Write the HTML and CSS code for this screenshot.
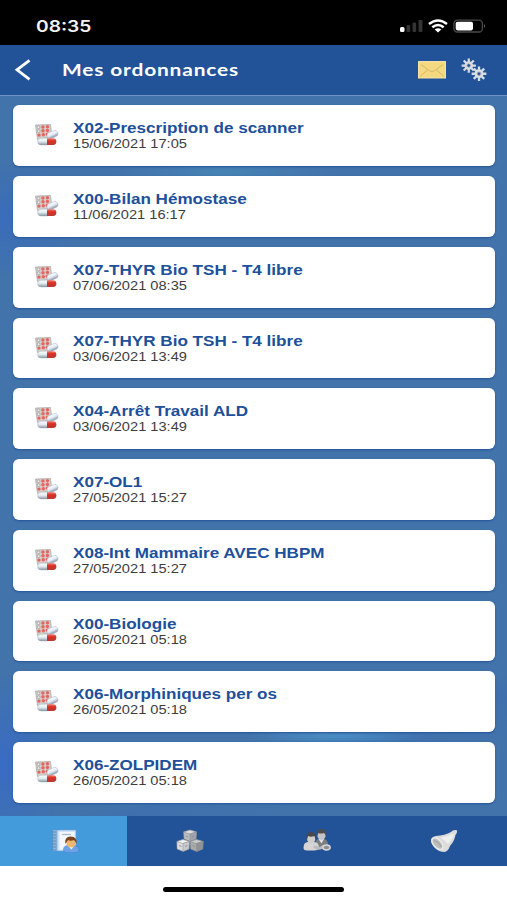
FILE: index.html
```html
<!DOCTYPE html>
<html lang="fr">
<head>
  <meta charset="UTF-8" />
  <meta name="viewport" content="width=device-width, initial-scale=1.0"/>
  <title>Mes ordonnances</title>
  <link rel="stylesheet" href="styles.css">
</head>
<body>
  <svg class="defs" width="0" height="0">
    <defs>
      <linearGradient id="redCap" x1="0" y1="0" x2="0" y2="1">
        <stop offset="0" stop-color="#f08074"/>
        <stop offset=".4" stop-color="#d92f24"/>
        <stop offset="1" stop-color="#b83a34"/>
      </linearGradient>
      <linearGradient id="whiteCap" x1="0" y1="0" x2="0" y2="1">
        <stop offset="0" stop-color="#fff"/>
        <stop offset=".5" stop-color="#e0e8f0"/>
        <stop offset="1" stop-color="#8794a2"/>
      </linearGradient>
      <symbol id="pills" viewBox="0 0 24 24">
        <path d="M1 2 16 1.500 17.500 14 3 16.500z" fill="#d5cdcb" stroke="#aaa5a5" stroke-width=".7"/>
        <g fill="#e4675c">
          <circle cx="8.400" cy="4" r="1.700"/><circle cx="13" cy="3.800" r="1.700"/>
          <circle cx="8.500" cy="7.700" r="1.700"/><circle cx="12.900" cy="7.400" r="1.700"/>
          <circle cx="4.500" cy="12.100" r="1.700"/><circle cx="8.800" cy="11.700" r="1.700"/><circle cx="12.900" cy="11.200" r="1.700"/>
        </g>
        <g fill="#eee" stroke="#9b9898" stroke-width=".7"><circle cx="4" cy="4.300" r="1.400"/><circle cx="4.200" cy="8.200" r="1.400"/></g>
        <rect x="12.200" y="8.500" width="11.500" height="6.200" rx="3.100" fill="url(#whiteCap)" stroke="#98a6c4" stroke-width=".4" transform="rotate(-24 18 11.500)"/>
        <path d="M6.500 15.200H13V22H6.500A3.400 3.400 0 0 1 6.500 15.200z" fill="url(#whiteCap)" stroke="#9aa7b3" stroke-width=".4"/>
        <path d="M12.500 15.200H18.500A3.400 3.400 0 0 1 18.500 22H12.500z" fill="url(#redCap)"/>
      </symbol>
      <symbol id="gear" viewBox="-10 -10 20 20">
        <g stroke="#d5dbe2" stroke-width="3">
          <path d="M0-9.500V9.500M-9.500 0H9.500M-6.700-6.700 6.700 6.700M6.700-6.700-6.700 6.700"/>
        </g>
        <circle r="5.700" fill="#d9dde2"/>
        <circle r="2.300" fill="#235398" stroke="#a5a9ad" stroke-width="1"/>
      </symbol>
    </defs>
  </svg>

  <div class="statusbar">
    <span class="clock">08:35</span>
    <div class="status-icons">
      <svg width="24" height="14" viewBox="0 0 24 14">
        <rect x="1" y="8" width="4.500" height="5" rx="1.500" fill="#fff"/>
        <rect x="7.500" y="6" width="3.700" height="7" rx="1" fill="#333"/>
        <rect x="13.500" y="3.500" width="3.700" height="9.500" rx="1" fill="#333"/>
        <rect x="19.500" y="1" width="4" height="12" rx="1" fill="#333"/>
      </svg>
      <svg class="wifi" width="20" height="14" viewBox="0 0 20 14">
        <g fill="none" stroke="#fff" stroke-width="2.400">
          <path d="M1 5Q10-2.200 19 5"/>
          <path d="M4.300 8.300Q10 3.600 15.700 8.300"/>
        </g>
        <path d="M6.700 10.400Q10 8 13.300 10.400L10 13.500z" fill="#fff"/>
      </svg>
      <svg class="battery" width="33" height="14" viewBox="0 0 33 14">
        <rect x=".9" y="1.200" width="28.500" height="11.800" rx="3.500" fill="none" stroke="#4a4a4a" stroke-width="1.300"/>
        <rect x="2.700" y="2.800" width="17.300" height="8.600" rx="1.800" fill="#fff"/>
        <path d="M31 5Q33 7 31 9z" fill="#666"/>
      </svg>
    </div>
  </div>

  <header class="topbar">
    <svg class="back" width="18" height="22" viewBox="0 0 18 22">
      <path d="M15.500 1.300 3 10.800 15.500 20.300" fill="none" stroke="#fff" stroke-width="2.800"/>
    </svg>
    <h1>Mes ordonnances</h1>
    <div class="actions">
      <svg width="28" height="18" viewBox="0 0 28 18">
        <rect x=".5" y=".5" width="27" height="16.500" fill="#f5d981" stroke="#f2e2a9"/>
        <path d="M2 15.500 10 8.500M26 15.500 18 8.500M3 3.500 11 9.500Q14 12 17 9.500L25 3.500" fill="none" stroke="#cfb468" stroke-width=".9"/>
      </svg>
      <svg class="gears" width="28" height="24" viewBox="0 0 28 24">
        <use href="#gear" x="0" y="0" width="17.500" height="15"/>
        <use href="#gear" x="10" y="8" width="18" height="15.500"/>
      </svg>
    </div>
  </header>

  <main class="list">
    <div class="card">
      <svg class="pills"><use href="#pills"/></svg>
      <div class="info"><h2>X02-Prescription de scanner</h2><p>15/06/2021 17:05</p></div>
    </div>
    <div class="card">
      <svg class="pills"><use href="#pills"/></svg>
      <div class="info"><h2>X00-Bilan Hémostase</h2><p>11/06/2021 16:17</p></div>
    </div>
    <div class="card">
      <svg class="pills"><use href="#pills"/></svg>
      <div class="info"><h2>X07-THYR Bio TSH - T4 libre</h2><p>07/06/2021 08:35</p></div>
    </div>
    <div class="card">
      <svg class="pills"><use href="#pills"/></svg>
      <div class="info"><h2>X07-THYR Bio TSH - T4 libre</h2><p>03/06/2021 13:49</p></div>
    </div>
    <div class="card">
      <svg class="pills"><use href="#pills"/></svg>
      <div class="info"><h2>X04-Arrêt Travail ALD</h2><p>03/06/2021 13:49</p></div>
    </div>
    <div class="card">
      <svg class="pills"><use href="#pills"/></svg>
      <div class="info"><h2>X07-OL1</h2><p>27/05/2021 15:27</p></div>
    </div>
    <div class="card">
      <svg class="pills"><use href="#pills"/></svg>
      <div class="info"><h2>X08-Int Mammaire AVEC HBPM</h2><p>27/05/2021 15:27</p></div>
    </div>
    <div class="card">
      <svg class="pills"><use href="#pills"/></svg>
      <div class="info"><h2>X00-Biologie</h2><p>26/05/2021 05:18</p></div>
    </div>
    <div class="card">
      <svg class="pills"><use href="#pills"/></svg>
      <div class="info"><h2>X06-Morphiniques per os</h2><p>26/05/2021 05:18</p></div>
    </div>
    <div class="card">
      <svg class="pills"><use href="#pills"/></svg>
      <div class="info"><h2>X06-ZOLPIDEM</h2><p>26/05/2021 05:18</p></div>
    </div>
  </main>

  <nav class="tabs">
    <div class="tab active">
      <!-- carnet -->
      <svg class="book" width="30" height="24" viewBox="0 0 30 24">
        <rect x="3" y="1" width="5" height="21" fill="#88b4dc"/>
        <path d="M7 1H26V22H7z" fill="#cfe4f7" stroke="#6d9fd0" stroke-width=".7"/>
        <rect x="9.500" y="3" width="15" height="17.500" fill="#f3f7fb"/>
        <path d="M1.500 3H6M1.500 6H6M1.500 9H6M1.500 12H6M1.500 15H6M1.500 18H6M1.500 21H6" stroke="#6689ab" stroke-width="1.200"/>
        <path d="M12 5.500H21" stroke="#a6bbcc" stroke-width="1.300"/>
        <path d="M13.500 21Q13.500 16.500 18 16.500H25Q29 17 29 21 29 23.700 25 23.700H17Q13.500 23.700 13.500 21z" fill="#6ba3e6" stroke="#3f7cc6" stroke-width=".5"/>
        <path d="M18 16.500 21.300 20.500 24.500 16.500z" fill="#fff"/>
        <ellipse cx="21" cy="13.700" rx="4.600" ry="4.900" fill="#eeb66f"/>
        <path d="M15.500 15Q14 7.500 20.700 7.500 27.500 7.500 26.500 15 25.300 12 24 11 20.500 12.500 18 11 17 12.500 15.500 15z" fill="#7a431d"/>
      </svg>
    </div>
    <div class="tab">
      <!-- cubes -->
      <svg width="28" height="24" viewBox="0 0 28 24">
        <g stroke="#85898d" stroke-width=".5">
          <path d="M7.500 3 14 1 20.500 3 20 10 14 12.500 8 10z" fill="#b9bcbf"/>
          <path d="M7.500 3 14 5 20.500 3 14 1z" fill="#dcdee0"/>
          <path d="M14 5V12.500L20 10 20.500 3z" fill="#a1a5a9"/>
          <path d="M.8 12.500 7 10.500 13.500 12.500 13 20 7 22.500 1 20z" fill="#dcdcdc"/>
          <path d="M.8 12.500 7 14.500 13.500 12.500 7 10.500z" fill="#f1f1f1"/>
          <path d="M7 14.500V22.500L13 20 13.500 12.500z" fill="#c9cbcd"/>
          <path d="M14 12.500 20.500 10.500 27.200 12.500 26.700 20 20.500 22.500 14.500 20z" fill="#aaa"/>
          <path d="M14 12.500 20.500 14.500 27.200 12.500 20.500 10.500z" fill="#c9cacb"/>
          <path d="M20.500 14.500V22.500L26.700 20 27.200 12.500z" fill="#919497"/>
        </g>
        <path d="M3 16.500 5.500 17.500M9 17.500 11.500 16.500M16.500 16.500 18.500 17.500M22.500 17.500 25 16.500M10 7 12 8M16 8 18 7" stroke="#8b8f93" stroke-width=".9"/>
      </svg>
    </div>
    <div class="tab">
      <!-- famille -->
      <svg width="30" height="25" viewBox="0 0 30 25">
        <path d="M13 18Q13 11 17 11H22Q26.500 12 26 18z" fill="#7b7e81"/>
        <path d="M16.500 11 19.500 15.500 22 11z" fill="#e5e5e5"/>
        <ellipse cx="19.500" cy="7" rx="4.200" ry="5" fill="#c4c4c4"/>
        <path d="M15 8Q14 1 19.500 1 25 1 24 8 23 6 22 5 19 6 16.500 5z" fill="#4b4d4f"/>
        <path d="M1.500 20Q1.500 14 6 14H12Q17 14 17 20 16 22.500 12 22.500H5Q1.500 22.500 1.500 20z" fill="#d5d5d5"/>
        <ellipse cx="9.200" cy="10.700" rx="4.200" ry="4.800" fill="#d0cdca"/>
        <path d="M4.700 13Q3 4 9 4 15.500 4 14 12.500 13 9.500 12.500 8 9 9.500 6 8z" fill="#47494b"/>
        <path d="M12 18.500Q18 22 22 18" fill="none" stroke="#bbb" stroke-width="3"/>
        <ellipse cx="24.500" cy="19.500" rx="3.600" ry="2.400" fill="#8d9092" stroke="#d6d6d6" stroke-width="1.500"/>
      </svg>
    </div>
    <div class="tab">
      <!-- cloche -->
      <svg class="bell" width="28" height="24" viewBox="0 0 28 24">
        <path d="M1 10.500Q2 7.500 6 7 15 6.500 21 3 23 .5 26.500 1 28 3 25.500 6 24.500 12 20 17 18 23 13.500 23 8 22.500 3.500 17.500 .5 14 1 10.500z" fill="#dcdcdb"/>
        <path d="M11 8.500Q18 7.500 24 4.500 23 10 18 15z" fill="#efefee"/>
        <ellipse cx="7.400" cy="14.600" rx="3.800" ry="7" transform="rotate(-43 7.400 14.600)" fill="#bdbdbc" stroke="#ebebea" stroke-width="1.300"/>
        <path d="M4 11.500Q8.500 12 11.500 18" fill="none" stroke="#a1a2a3" stroke-width="1"/>
      </svg>
    </div>
  </nav>

  <footer class="home"><span class="home-bar"></span></footer>
</body>
</html>
```

FILE: styles.css
```css
* { box-sizing: border-box; }
body { margin: 0; height: 900px; display: flex; flex-direction: column; overflow: hidden; background: #fff; font-family: "Liberation Sans", Arial, sans-serif; }
h1, h2, p { margin: 0; font-weight: normal; white-space: nowrap; }
svg { display: block; flex: none; }
.defs { width: 0; height: 0; position: absolute; }

.statusbar { flex: none; height: 45px; padding: 6px 21px 0 36px; display: flex; justify-content: space-between; align-items: center; background: #000; color: #f4f4f4; }
.clock { font: 600 16px/20px Inter, sans-serif; transform: scaleX(1.2); transform-origin: left; }
.status-icons { display: flex; align-items: center; }
.wifi { margin-left: 5px; }
.battery { margin-left: 5px; }

.topbar { flex: none; height: 50px; padding: 0 19px 0 14px; display: flex; align-items: center; background: #225398; color: #fff; }
.topbar h1 { margin-left: 30px; font: bold 17.5px/24px "Trebuchet MS", Lato, sans-serif; letter-spacing: 0.7px; transform: scaleX(1.195); transform-origin: left; }
.actions { margin-left: auto; display: flex; align-items: center; gap: 14px; }

.list {
  flex: none; height: 720.5px; padding: 9.25px 12px 0 13px; display: flex; flex-direction: column; gap: 10px;
  border-top: 1px solid #6d91c4;
  background:
    radial-gradient(ellipse at 0 93%, #386bc4 0, transparent 70px),
    radial-gradient(ellipse 90px 60px at 0 17%, #396cbb 0, transparent 100%),
    radial-gradient(ellipse 110px 10px at 225px 76px, #4a93bd88 0, transparent 100%),
    radial-gradient(ellipse 90px 9px at 335px 640px, #4d9bd0aa 0, transparent 100%),
    linear-gradient(162deg, transparent 84%, #396bb655 86%, transparent 92%),
    #4273aa;
}
.card { flex: none; height: 60.75px; padding: 15px 0 0 21px; display: flex; background: #fff; border-radius: 6px; box-shadow: 0 1px 2px #24549b; }
.pills { width: 25px; height: 24px; margin-top: 3px; }
.info { margin-left: 14px; transform: scaleX(1.22); transform-origin: left; }
.info h2 { font-size: 14px; line-height: 17px; font-weight: bold; color: #20509a; }
.info p { font-size: 12px; line-height: 14px; color: #3d3d3d; }

.tabs { flex: none; height: 50.5px; display: grid; grid-template-columns: repeat(4, 1fr); background: #225398; }
.tab { display: flex; align-items: center; justify-content: center; }
.tab.active { background: #439bdc; }
.book { margin-left: 3px; }

.home { flex: 1; display: flex; align-items: center; justify-content: center; padding-top: 12px; }
.home-bar { width: 181px; height: 5px; border-radius: 3px; background: #000; }
```
